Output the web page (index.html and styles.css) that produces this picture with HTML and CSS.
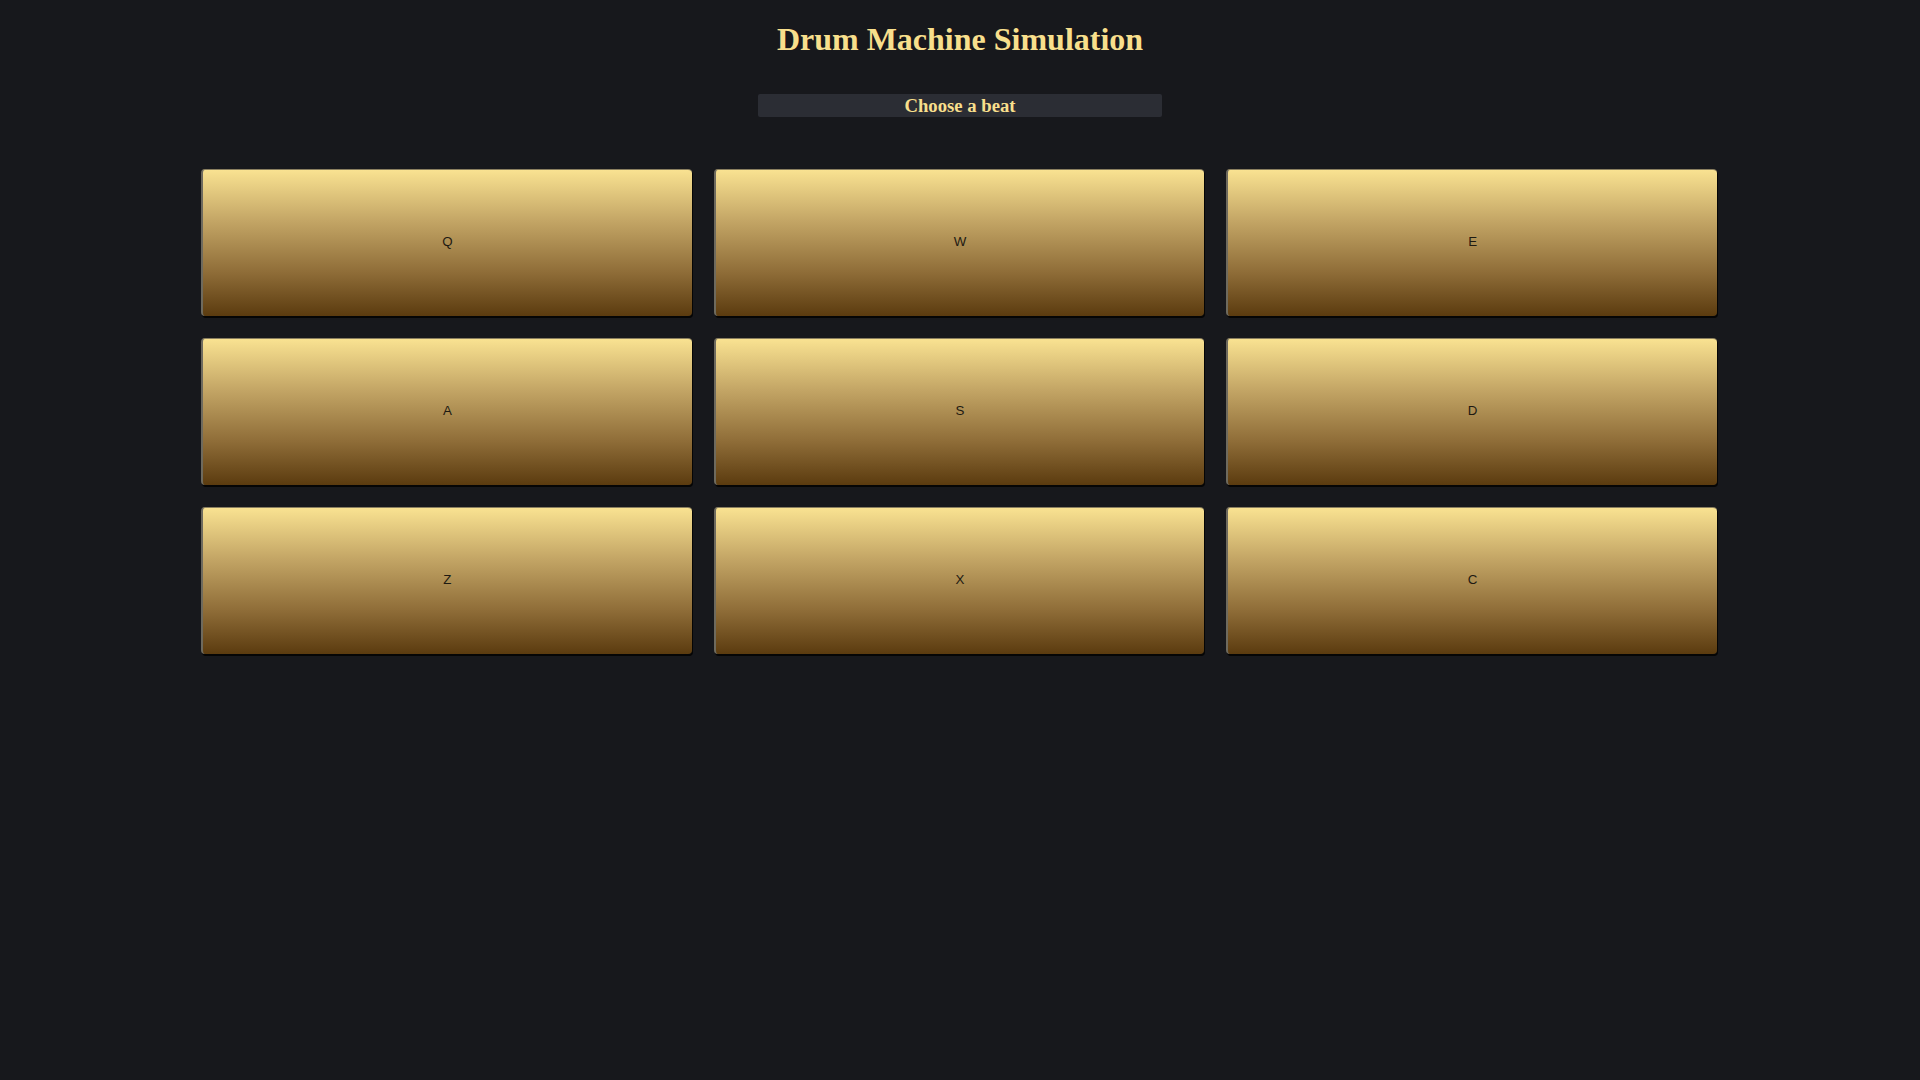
FILE: index.html
```html
<!DOCTYPE html>
<html>
<head>
<meta charset="utf-8">
<title>Drum Machine Simulation</title>
<link rel="stylesheet" href="styles.css">
</head>
<body>
<div class="app">
  <h1 class="title">Drum Machine Simulation</h1>
  <div class="display">Choose a beat</div>
  <div class="pads">
    <button class="pad">Q</button>
    <button class="pad">W</button>
    <button class="pad">E</button>
    <button class="pad">A</button>
    <button class="pad">S</button>
    <button class="pad">D</button>
    <button class="pad">Z</button>
    <button class="pad">X</button>
    <button class="pad">C</button>
  </div>
</div>
</body>
</html>
```
FILE: styles.css
```css
html, body {
  margin: 0;
  padding: 0;
  background: #17181c;
  height: 100%;
}
.app {
  display: flex;
  flex-direction: column;
  align-items: center;
  font-family: "Liberation Serif", "Times New Roman", serif;
}
.title {
  margin: 21px 0 0;
  font-size: 32px;
  line-height: 37px;
  font-weight: bold;
  color: #f8df8c;
}
.display {
  margin-top: 36px;
  width: 404px;
  height: 23px;
  line-height: 23px;
  background: #2b2d34;
  border-radius: 2px;
  color: #f8df8c;
  font-weight: bold;
  font-size: 18.7px;
  text-align: center;
}
.pads {
  margin-top: 52px;
  margin-right: 2px;
  width: 1516px;
  display: grid;
  grid-template-columns: repeat(3, 1fr);
  grid-auto-rows: 147px;
  column-gap: 22px;
  row-gap: 22px;
}
.pad {
  font-family: "Liberation Sans", Arial, sans-serif;
  font-size: 13.33px;
  color: #1e1a12;
  background: linear-gradient(to bottom, #f9e291 0%, #c3a565 35%, #8f6d38 70%, #5b3b0f 100%);
  border: none;
  border-left: 2px solid #6e6a5e;
  border-top: 1px solid #8a7f60;
  border-radius: 4px;
  box-shadow: 1px 2px 0 #050505;
  padding: 0 0 4px;
}
```
